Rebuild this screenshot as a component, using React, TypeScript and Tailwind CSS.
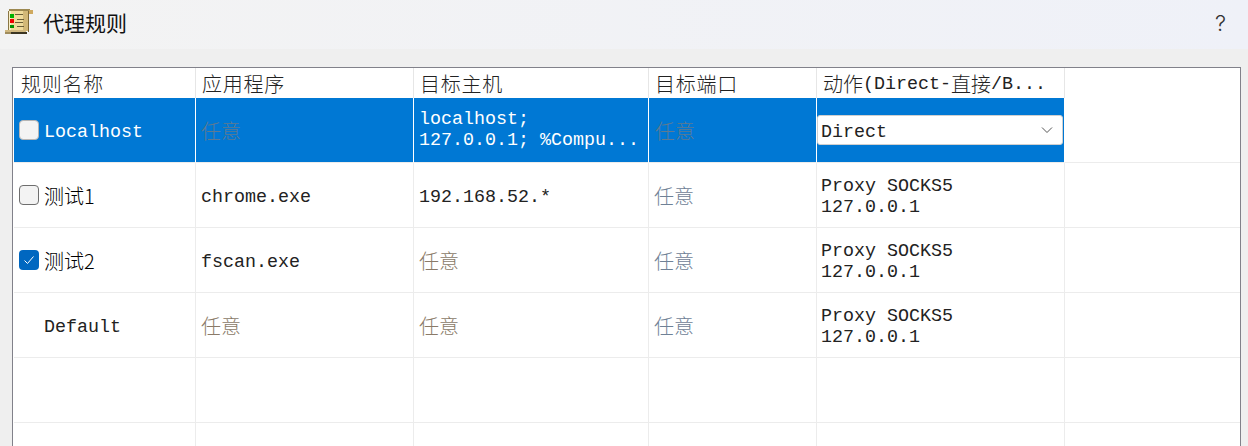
import React from 'react';

const mono = "font-['Liberation_Mono','Noto_Sans_CJK_SC',monospace]";

// CJK glyphs are wider than the latin cell in the original font
const Cjk = ({ children, className = '' }: { children: React.ReactNode; className?: string }) => (
  <span className={`text-[20px] leading-[21px] font-['Noto_Sans_CJK_SC',sans-serif] font-light ${className}`}>{children}</span>
);

const ScrollIcon = () => (
  <svg width="29" height="26" viewBox="0 0 29 26" shapeRendering="crispEdges" className="mt-[-5px]">
    <rect x="4" y="1" width="20" height="21" fill="#efdb9c" />
    <rect x="4" y="0" width="21" height="2" fill="#9c8850" />
    <rect x="24" y="1" width="4" height="4" fill="#cfa95f" />
    <rect x="18" y="2" width="5" height="20" fill="#d2b877" />
    <rect x="23" y="2" width="1" height="21" fill="#7a6534" />
    <rect x="3" y="2" width="1" height="19" fill="#8a7644" />
    <rect x="4" y="2" width="2" height="19" fill="#f9efc9" />
    <rect x="5" y="5" width="4" height="4" fill="#00b000" />
    <rect x="5" y="10" width="4" height="4" fill="#f00000" />
    <rect x="5" y="16" width="4" height="3" fill="#009000" />
    <rect x="10" y="5" width="8" height="1" fill="#6a5e38" />
    <rect x="12" y="10" width="7" height="1" fill="#6a5e38" />
    <rect x="10" y="13" width="8" height="1" fill="#6a5e38" />
    <rect x="12" y="17" width="7" height="1" fill="#6a5e38" />
    <rect x="0" y="21" width="21" height="2" fill="#d0b880" />
    <rect x="0" y="23" width="21" height="2" fill="#a08c5c" />
    <rect x="6" y="23" width="16" height="2" fill="#3a3422" />
  </svg>
);

const Check = ({ checked }: { checked?: boolean }) =>
  checked ? (
    <span className="w-5 h-5 rounded-[4px] bg-[#0067c0] flex items-center justify-center shrink-0">
      <svg width="12" height="10" viewBox="0 0 12 10" fill="none" stroke="#fff" strokeWidth="1">
        <path d="M1.5 5.5 L4.5 8.5 L10.5 1.5" />
      </svg>
    </span>
  ) : (
    <span className="w-5 h-5 rounded-[4px] bg-[#f3f3f3] border border-[#6e6e6e] shrink-0" />
  );

const cell = 'flex items-center border-r border-b border-[#ececec] h-[65px]';
const headCell = 'flex items-center h-[30px] pl-[6px] border-r border-[#e6e6e6] text-[#222]';
const blueCell = 'h-[65px] bg-[#0078d4] border-r border-b border-r-white border-b-[#ececec] flex items-center';

const ProxyCell = () => (
  <div className={`${cell} pl-[4px] leading-[21px] pt-[4px] text-[#222]`}>
    <div>
      Proxy SOCKS5
      <br />
      127.0.0.1
    </div>
  </div>
);

const Latin = ({ children }: { children: React.ReactNode }) => (
  <span className="pt-[6px] text-[#222]">{children}</span>
);

const rows = [
  { name: <Cjk>测试1</Cjk>, box: 'off', app: 'chrome.exe', host: '192.168.52.*' },
  { name: <Cjk>测试2</Cjk>, box: 'on', app: 'fscan.exe', host: '' },
  { name: <Latin>Default</Latin>, box: '', app: '', host: '' },
];

export default function App() {
  return (
    <div className={`${mono} h-[446px] w-[1248px] overflow-hidden bg-[#efefef] text-[18.33px] text-black`}>
      <div className="h-[49px] flex items-center justify-between bg-gradient-to-r from-[#f3f3f3] to-[#eff1f8] pl-[5px] pr-[22px]">
        <div className="flex items-center gap-[9px]">
          <ScrollIcon />
          <span className="text-[21px] mt-[-4px] font-['Noto_Sans_CJK_SC',sans-serif] text-[#111]">代理规则</span>
        </div>
        <span className="font-['Inter',sans-serif] font-light text-[22px] mt-[-2px] text-[#333]">?</span>
      </div>
      <div className="mt-[18px] ml-[12px] mr-[7px] h-[400px] border-[1px] border-[#81818a] pl-[1px] bg-white">
        <div className="grid grid-cols-[182px_218px_235px_168px_248px_1fr]">
          <div className={`${headCell} pl-[7px]`}><Cjk className="tracking-[0.75px]">规则名称</Cjk></div>
          <div className={headCell}><Cjk className="tracking-[0.75px]">应用程序</Cjk></div>
          <div className={headCell}><Cjk className="tracking-[0.75px]">目标主机</Cjk></div>
          <div className={headCell}><Cjk className="tracking-[0.75px]">目标端口</Cjk></div>
          <div className={`${headCell} whitespace-nowrap pl-[5px]`}>
            <Cjk>动作</Cjk>
            <span className="pt-[4px]">(Direct-</span>
            <Cjk>直接</Cjk>
            <span className="pt-[4px]">/B...</span>
          </div>
          <div />

          <div className={`${blueCell} pl-[5px] gap-[5px] text-white`}>
            <span className="w-5 h-5 rounded-[4px] bg-[#f3f3f3] border border-[#b5b5b5] shrink-0" />
            <span className="pt-[5px]">Localhost</span>
          </div>
          <div className={`${blueCell} pl-[5px]`}>
            <Cjk className="text-[#5f7a92]">任意</Cjk>
          </div>
          <div className={`${blueCell} pl-[5px] text-white leading-[21px] pb-[1px]`}>
            <div>
              localhost;
              <br />
              127.0.0.1; %Compu...
            </div>
          </div>
          <div className={`${blueCell} pl-[6px]`}>
            <Cjk className="text-[#5f7a92]">任意</Cjk>
          </div>
          <div className={blueCell}>
            <div className="w-[246px] h-[30px] bg-white border border-[#cfcfcf] rounded-[3px] flex items-center justify-between pl-[3px] pr-[9px] text-[#222]">
              <span className="pt-[6px]">Direct</span>
              <svg width="12" height="8" viewBox="0 0 12 8" fill="none" stroke="#555" strokeWidth="1">
                <path d="M1 1.5 L6 6.5 L11 1.5" />
              </svg>
            </div>
          </div>
          <div className="h-[65px] border-b border-[#ececec]" />

          {rows.map((r, i) => (
            <React.Fragment key={i}>
              <div className={`${cell} pl-[5px] gap-[5px]`}>
                {r.box ? <Check checked={r.box === 'on'} /> : <span className="w-5 shrink-0" />}
                {r.name}
              </div>
              <div className={`${cell} pl-[5px]`}>
                {r.app ? <Latin>{r.app}</Latin> : <Cjk className="text-[#8a7a68]">任意</Cjk>}
              </div>
              <div className={`${cell} pl-[5px]`}>
                {r.host ? <Latin>{r.host}</Latin> : <Cjk className="text-[#8a7a68]">任意</Cjk>}
              </div>
              <div className={`${cell} pl-[5px]`}>
                <Cjk className="text-[#6f8196]">任意</Cjk>
              </div>
              <ProxyCell />
              <div className="h-[65px] border-b border-[#ececec]" />
            </React.Fragment>
          ))}

          {[0, 1].map((i) => (
            <React.Fragment key={i}>
              <div className={cell} />
              <div className={cell} />
              <div className={cell} />
              <div className={cell} />
              <div className={cell} />
              <div className="h-[65px] border-b border-[#ececec]" />
            </React.Fragment>
          ))}
        </div>
      </div>
    </div>
  );
}
